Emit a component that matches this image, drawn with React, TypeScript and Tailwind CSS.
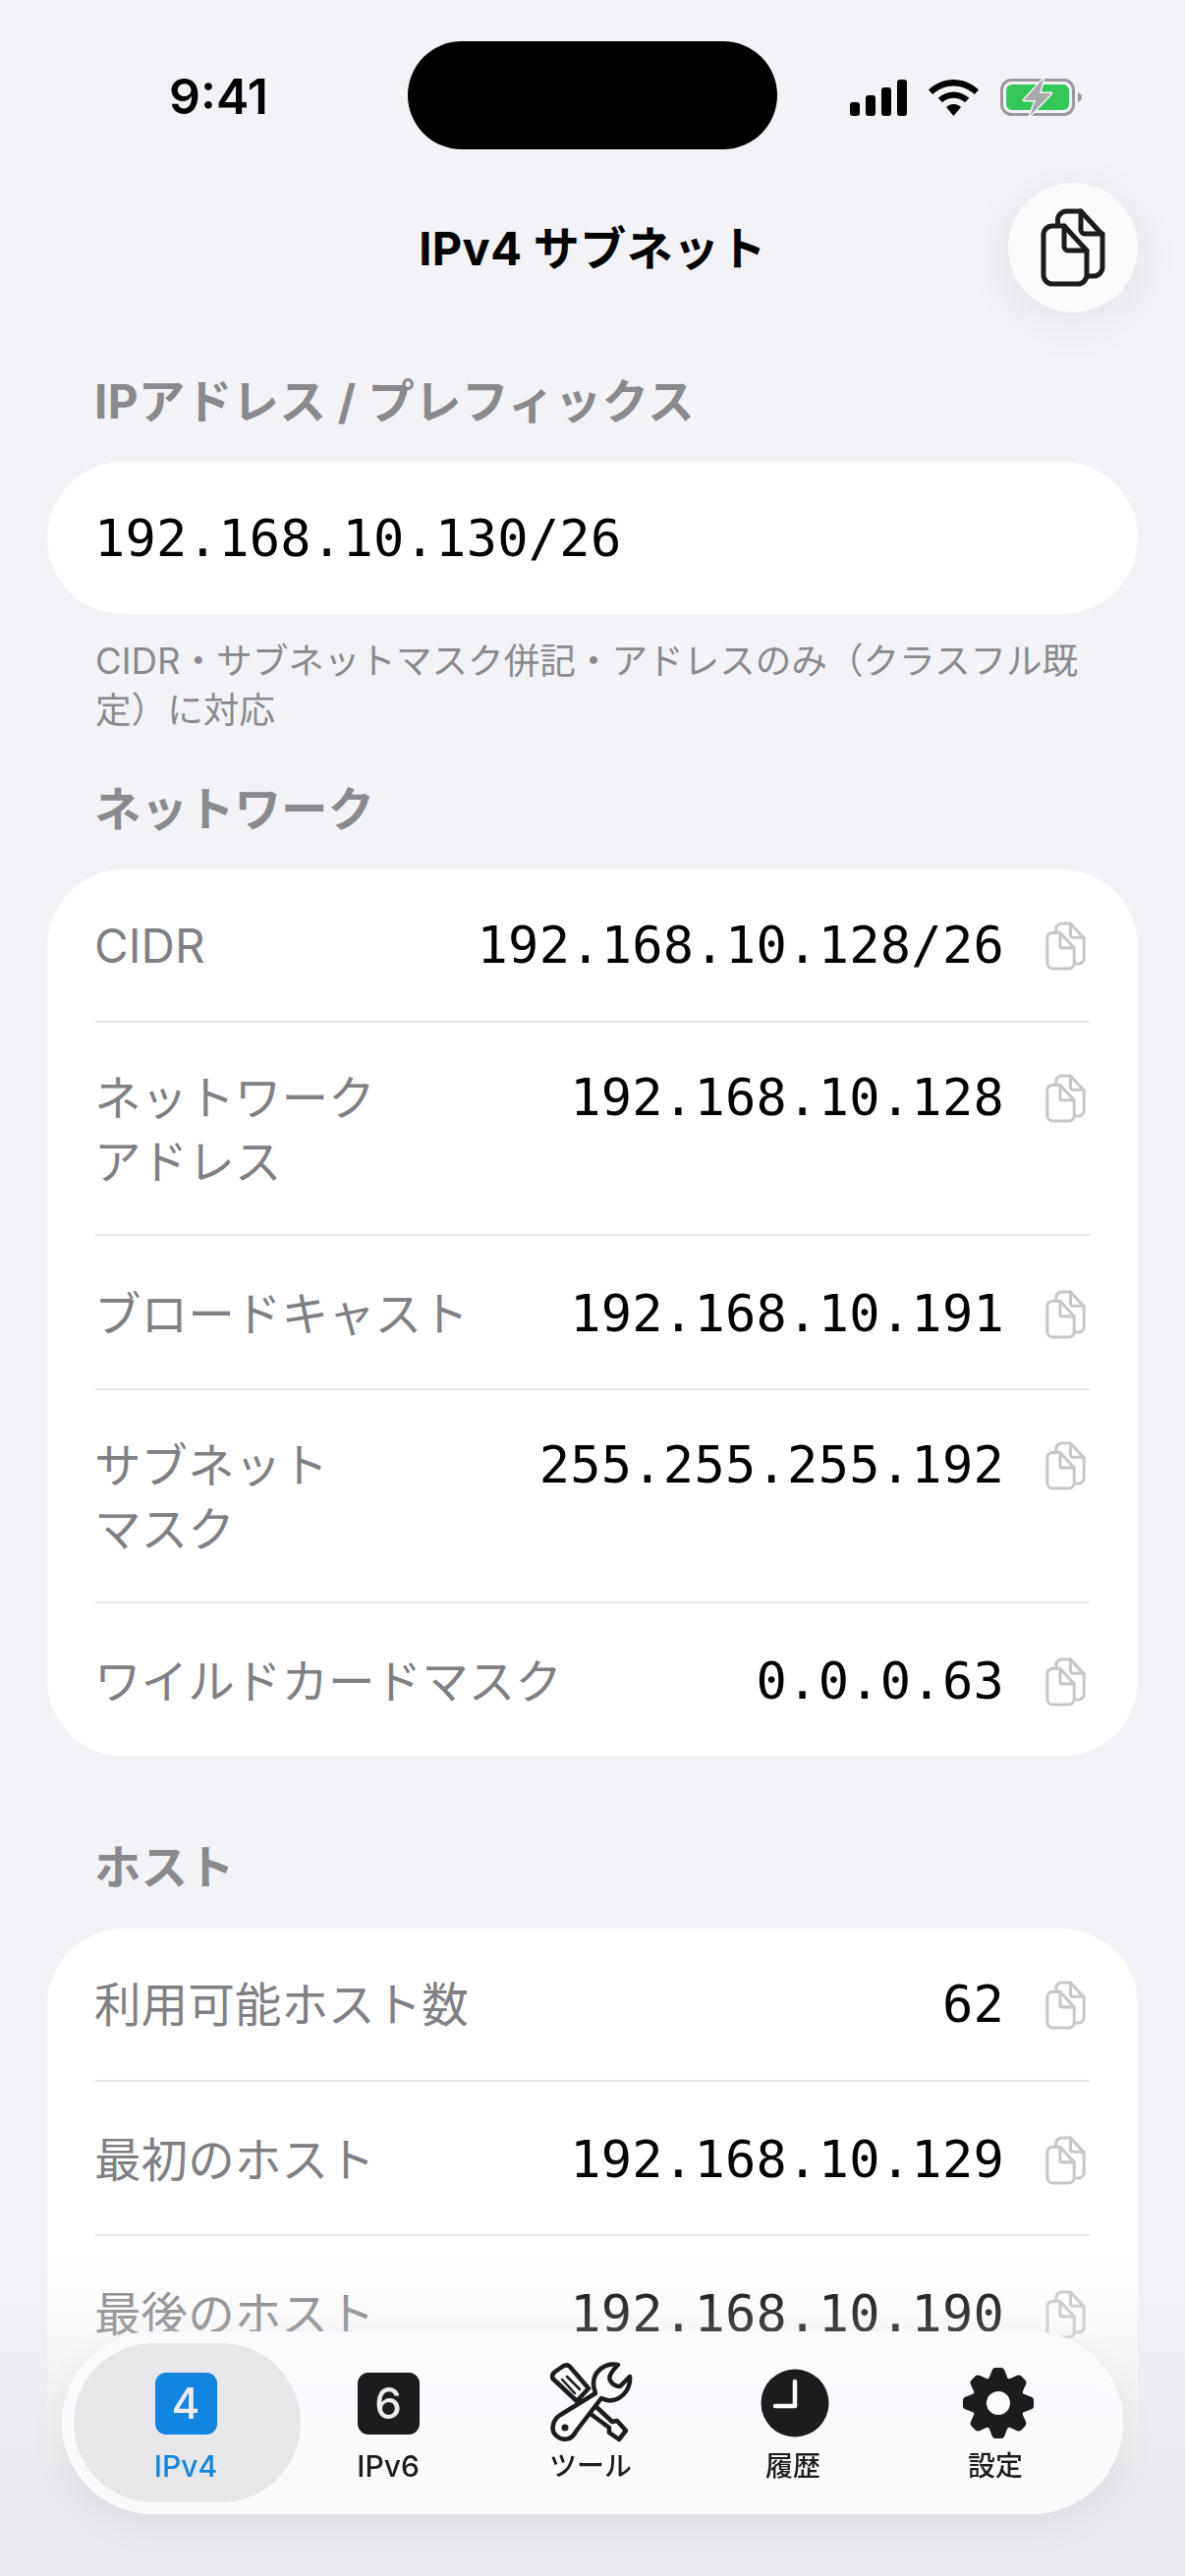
const sans = "font-['Inter','Noto_Sans_CJK_JP',sans-serif]"

const networkRows = [
  { label: 'CIDR', value: '192.168.10.128/26' },
  { label: 'ネットワーク\nアドレス', value: '192.168.10.128' },
  { label: 'ブロードキャスト', value: '192.168.10.191' },
  { label: 'サブネット\nマスク', value: '255.255.255.192' },
  { label: 'ワイルドカードマスク', value: '0.0.0.63' },
]

const hostRows = [
  { label: '利用可能ホスト数', value: '62' },
  { label: '最初のホスト', value: '192.168.10.129' },
  { label: '最後のホスト', value: '192.168.10.190' },
  { label: '総アドレス数', value: '64' },
]

function CopyIcon({ className }: { className: string }) {
  return (
    <svg viewBox="0 0 66 80" fill="none" stroke="currentColor" strokeWidth="5" strokeLinejoin="round" strokeLinecap="round" className={className}>
      <path d="M17.5 17V12a9 9 0 0 1 9-9H41L63 27V60a9 9 0 0 1-9 9H49" />
      <path d="M41 3V22a4 4 0 0 0 4 4H63" />
      <path d="M12 18H24L47 43V68a9 9 0 0 1-9 9H12a9 9 0 0 1-9-9V27a9 9 0 0 1 9-9Z" />
      <path d="M24 18V39a4 4 0 0 0 4 4H47" />
    </svg>
  )
}

function SignalIcon() {
  return (
    <svg width="58" height="37" viewBox="0 0 58 37" fill="#000">
      <rect x="0" y="23" width="10" height="14" rx="3" />
      <rect x="16" y="16" width="10" height="21" rx="3" />
      <rect x="32" y="8" width="10" height="29" rx="3" />
      <rect x="48" y="0" width="10" height="37" rx="3" />
    </svg>
  )
}

function WifiIcon() {
  return (
    <svg width="51" height="37" viewBox="0 0 51 37" fill="#000">
      <path d="M25.5 0C35 0 44 3.800 51 10.500L46.800 15C41 9.600 33.500 6.500 25.500 6.500S10 9.600 4.200 15L0 10.500C7 3.800 16 0 25.500 0Z" />
      <path d="M25.500 12.500C31.500 12.500 37 14.800 41.300 18.800L37 23.300C33.800 20.400 29.800 18.800 25.500 18.800S17.200 20.400 14 23.300L9.700 18.800C14 14.800 19.500 12.500 25.500 12.500Z" />
      <path d="M25.500 25C28.300 25 30.900 26 33 27.900L25.500 37 18 27.900C20.100 26 22.700 25 25.500 25Z" />
    </svg>
  )
}

function BatteryIcon() {
  return (
    <svg width="84" height="42" viewBox="0 0 84 42">
      <rect x="1.500" y="3.500" width="73" height="35" rx="10" fill="none" stroke="#9a9a9e" strokeWidth="3" />
      <rect x="6" y="8" width="64" height="26" rx="6" fill="#34c759" />
      <path d="M79 16c3 1 4 3 4 5s-1 4-4 5Z" fill="#9a9a9e" />
      <path d="M44 2 24 24H36L30 40 52 17H40Z" fill="#a8a8ad" stroke="#f2f2f7" strokeWidth="3" strokeLinejoin="round" paintOrder="stroke" />
    </svg>
  )
}

function ToolsIcon() {
  return (
    <svg width="86" height="84" viewBox="14 10 86 84" fill="none" stroke="#1c1c1e" strokeWidth="4.500" strokeLinejoin="round" strokeLinecap="round">
      <path d="M63 56 79 71 84 70 93 80 86 89 76 82 76 77 57 63" />
      <path d="M18.500 27Q17 23 21 20L29 14.500Q33 12 36 15L55 37 43 50Z" />
      <path d="M28 28 41 42M33 25 46 38" strokeWidth="2.500" />
      <path d="M85 13C72 10 60 20 60 32 60 36 61 39 62 42L28 63C18 68 16 80 22 85 28 91 38 90 42 81L68 47C72 49 76 50 80 49 90 47 98 37 97 25L87 35Q80 35 77 29 74 24 85 13Z" fill="#fbfbfe" />
      <circle cx="31" cy="77" r="3.500" fill="#1c1c1e" stroke="none" />
    </svg>
  )
}

function ClockIcon() {
  return (
    <svg width="70" height="70" viewBox="0 0 70 70" className="ml-[4px]">
      <circle cx="35" cy="35" r="34.500" fill="#1c1c1e" />
      <path d="M35 13V38H15" fill="none" stroke="#fbfbfe" strokeWidth="4.500" strokeLinecap="round" strokeLinejoin="round" />
    </svg>
  )
}

function GearIcon() {
  const teeth = [0, 45, 90, 135, 180, 225, 270, 315]
  return (
    <svg width="72" height="72" viewBox="-36 -36 72 72" className="ml-[5px]">
      <circle r="27" fill="#1c1c1e" />
      {teeth.map(a => (
        <path key={a} transform={`rotate(${a})`} d="M-10-24-6.500-33Q-5.500-36-3-36H3Q5.500-36 6.500-33L10-24Z" fill="#1c1c1e" />
      ))}
      <circle r="12" fill="#fbfbfe" />
    </svg>
  )
}

function SectionLabel({ children, className }: { children: string; className: string }) {
  return <div className={`pl-[96px] text-[47.5px] leading-[60px] font-bold text-[#8a8a8e] ${className}`}>{children}</div>
}

function Row({ label, value, first, last }: { label: string; value: string; first: boolean; last: boolean }) {
  const twoLines = label.includes('\n')
  return (
    <div
      className={`flex justify-between mx-[49px] ${
        first ? 'pt-[45px] pb-[44px]' : twoLines ? 'pt-[44px] pb-[41px]' : last ? 'pt-[47px] pb-[44px]' : 'pt-[47px] pb-[43px]'
      } ${last ? '' : 'border-b-2 border-[#e6e6e8]'}`}
    >
      <div className="-ml-[1px] text-[47.6px] leading-[65px] text-[#808084] whitespace-pre-line">{label}</div>
      <div className="flex items-start">
        <span className="font-['DejaVu_Sans_Mono',monospace] text-[52px] tracking-[0.25px] leading-[65px] text-black">{value}</span>
        <CopyIcon className="w-[41px] h-[50px] mt-[8px] ml-[42px] mr-[4px] text-[#c7c7c7]" />
      </div>
    </div>
  )
}

function Card({ rows }: { rows: { label: string; value: string }[] }) {
  return (
    <div className="mx-[48px] bg-white rounded-[78px]">
      {rows.map((r, i) => (
        <Row key={r.label} label={r.label} value={r.value} first={i === 0} last={i === rows.length - 1} />
      ))}
    </div>
  )
}

function Tab({ icon, label, className }: { icon: React.ReactNode; label: string; className: string }) {
  return (
    <div className="w-[206px] flex flex-col items-center">
      <div className="h-[84px] flex items-center justify-center">{icon}</div>
      <div className={`mt-[2px] h-[40px] leading-[40px] font-medium ${className}`}>{label}</div>
    </div>
  )
}

function Badge({ digit, className }: { digit: string; className: string }) {
  return (
    <div className={`w-[63px] h-[63px] rounded-[11px] flex items-center justify-center text-[44px] font-medium leading-none text-[#ececee] ${className}`}>
      {digit}
    </div>
  )
}

export default function App() {
  return (
    <div className={`relative w-[1206px] h-[2622px] overflow-hidden bg-[#f2f2f7] ${sans}`}>
      {/* status bar */}
      <div className="flex items-start pt-[42px]">
        <div className="w-[415px] pl-[172px] pt-[27px] text-[50px] leading-[58px] font-semibold text-black">9:41</div>
        <div className="w-[376px] h-[110px] rounded-[55px] bg-black" />
        <div className="flex items-center pl-[74px] pt-[36px] gap-[22px]">
          <SignalIcon />
          <WifiIcon />
          <BatteryIcon />
        </div>
      </div>

      <div className="relative h-[226px] pt-[67px] text-center text-[47px] tracking-[0.4px] leading-[68px] font-bold text-black">
        IPv4 サブネット
        <button className="absolute left-[1026px] top-[34px] w-[132px] h-[132px] rounded-full bg-[#fbfbfe] shadow-[0_10px_50px_rgba(0,0,0,0.07)] flex items-center justify-center text-[#1c1c1e]">
          <CopyIcon className="w-[66px] h-[80px]" />
        </button>
      </div>

      <SectionLabel className="mt-[1px] mb-[31px] tracking-[0.35px]">IPアドレス / プレフィックス</SectionLabel>
      <div className="mx-[48px] h-[155px] rounded-[78px] bg-white pl-[48px] flex items-center font-['DejaVu_Sans_Mono',monospace] text-[52px] tracking-[0.25px] text-black">
        192.168.10.130/26
      </div>
      <p className="mt-[23px] px-[97px] text-[36.6px] leading-[50px] text-[#8a8a8e]">
        CIDR・サブネットマスク併記・アドレスのみ（クラスフル既定）に対応
      </p>

      <SectionLabel className="mt-[46px] mb-[31px]">ネットワーク</SectionLabel>
      <Card rows={networkRows} />

      <SectionLabel className="mt-[83px] mb-[32px]">ホスト</SectionLabel>
      <Card rows={hostRows} />

      {/* fade under the floating tab bar */}
      <div className="absolute left-0 right-0 top-[2290px] bottom-0 bg-gradient-to-b from-[#ecedf0]/0 via-[#ebebef]/30 via-25% to-[#e9e9ed] to-70%" />

      <nav className="absolute left-[63px] top-[2373px] w-[1080px] h-[186px] rounded-[93px] bg-[#fbfbfe]/93 backdrop-blur-md shadow-[0_12px_40px_rgba(0,0,0,0.05)] pl-[23px] pt-[31px] flex">
        <div className="absolute left-[12px] top-[12px] w-[231px] h-[162px] rounded-[81px] bg-[#e7e7ea]" />
        <div className="relative flex">
          <Tab icon={<Badge digit="4" className="bg-[#1185e0]" />} label="IPv4" className="text-[30px] text-[#1185e0]" />
          <Tab icon={<Badge digit="6" className="bg-[#1c1c1e]" />} label="IPv6" className="text-[30px] text-[#1c1c1e]" />
          <Tab icon={<ToolsIcon />} label="ツール" className="text-[28px] text-[#1c1c1e]" />
          <Tab icon={<ClockIcon />} label="履歴" className="text-[28px] text-[#1c1c1e]" />
          <Tab icon={<GearIcon />} label="設定" className="text-[28px] text-[#1c1c1e]" />
        </div>
      </nav>
    </div>
  )
}
